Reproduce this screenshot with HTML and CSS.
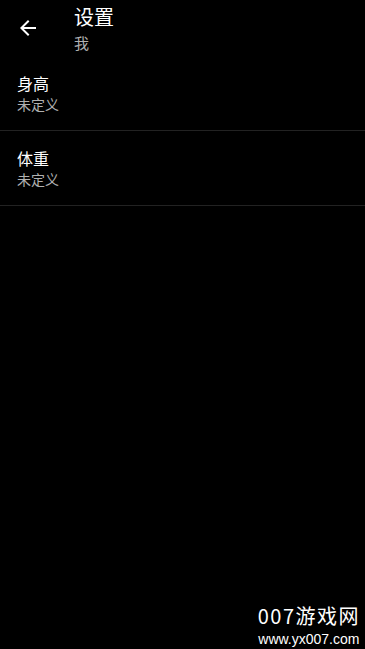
FILE: index.html
```html
<!DOCTYPE html>
<html lang="zh">
<head>
<meta charset="utf-8">
<link rel="stylesheet" href="styles.css">
</head>
<body>
<div class="app">
  <header class="toolbar">
    <div class="back">
      <svg width="24" height="24" viewBox="0 0 24 24"><path d="M20 11H7.83l5.59-5.59L12 4l-8 8 8 8 1.41-1.41L7.83 13H20v-2z" fill="#fff"/></svg>
    </div>
    <div class="titles">
      <div class="title">设置</div>
      <div class="subtitle">我</div>
    </div>
  </header>
  <div class="list">
    <div class="item">
      <div class="item-title">身高</div>
      <div class="item-sub">未定义</div>
    </div>
    <div class="item">
      <div class="item-title">体重</div>
      <div class="item-sub">未定义</div>
    </div>
  </div>
  <div class="watermark">
    <div class="wm-big">007游戏网</div>
    <div class="wm-small">www.yx007.com</div>
  </div>
</div>
</body>
</html>
```
FILE: styles.css
```css
html, body {
  margin: 0;
  padding: 0;
  background: #000;
}
body {
  font-family: "Noto Sans CJK SC", "Noto Sans", sans-serif;
  color: #fff;
}
.app {
  position: relative;
  width: 365px;
  height: 649px;
  overflow: hidden;
  background: #000;
}
.toolbar {
  height: 56px;
  display: flex;
  align-items: flex-start;
}
.back {
  width: 24px;
  height: 24px;
  margin: 16px 0 0 16px;
}
.back svg { display: block; }
.titles {
  margin-left: 34px;
  padding-top: 4px;
}
.title {
  font-size: 20px;
  line-height: 26px;
  color: #fff;
}
.subtitle {
  font-size: 15px;
  line-height: 20px;
  margin-top: 3px;
  color: #b0b0b0;
}
.item {
  padding: 16px 17px 16px;
  height: 42px;
  border-bottom: 1px solid #222;
}
.item-title {
  font-size: 16px;
  line-height: 22px;
  color: #fff;
}
.item-sub {
  font-size: 14px;
  line-height: 20px;
  color: #b0b0b0;
}
.watermark {
  position: absolute;
  right: 5px;
  bottom: 2px;
  display: flex;
  flex-direction: column;
  align-items: center;
  color: #fff;
}
.wm-big {
  font-size: 20px;
  line-height: 22px;
  letter-spacing: 1.5px;
}
.wm-small {
  font-family: "Liberation Sans", sans-serif;
  font-size: 14px;
  line-height: 16px;
  margin-top: 4px;
}
```
